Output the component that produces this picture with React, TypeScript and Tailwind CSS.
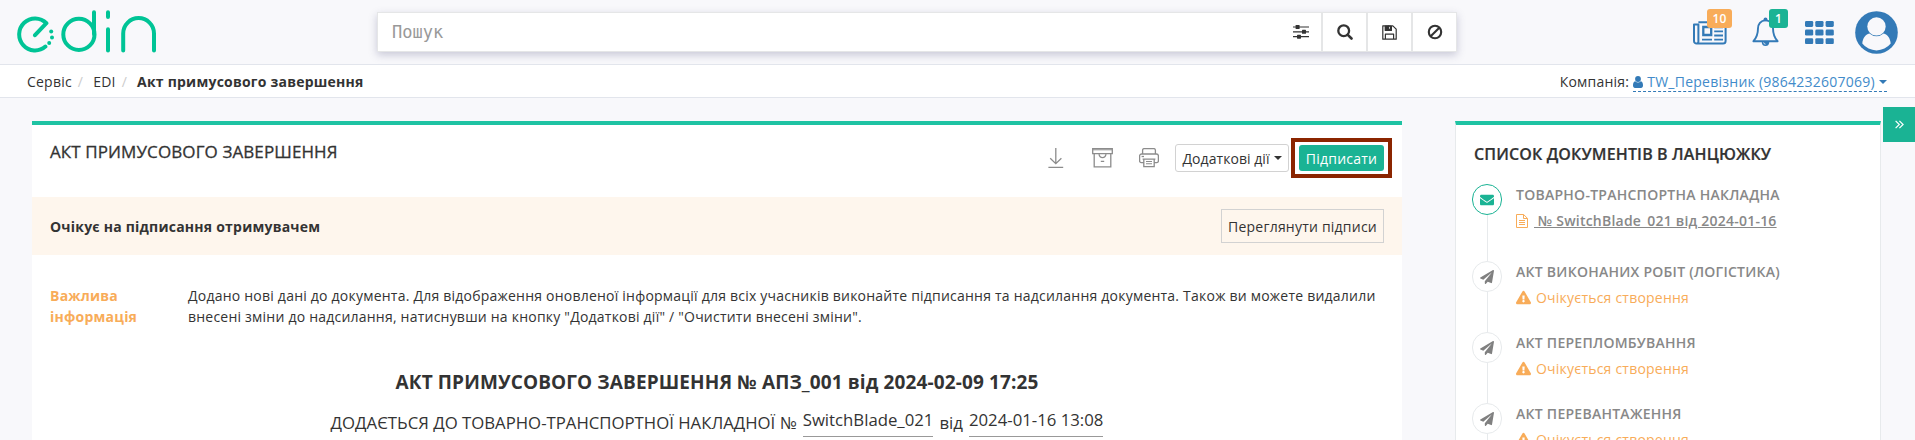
import type { ReactNode } from "react";
import { FaEnvelope, FaExclamationTriangle, FaPaperPlane } from "react-icons/fa";

function Logo() {
  return (
    <svg width="140" height="46" viewBox="0 0 140 46" fill="none" stroke="#00c496" strokeWidth="4" strokeLinecap="round" strokeLinejoin="round" className="block">
      <path d="M18 27.2 L29.4 15.2 A15.9 16 0 1 0 28.4 38.6" />
      <circle cx="61.9" cy="26.4" r="15.6" />
      <path d="M77 4.2 V26 M91 4.2 V9 M91 21.3 V42.6 M106.2 42.6 V25.5 a15.4 15.4 0 0 1 30.8 0 V42.6" />
      <g fill="#00c496" stroke="none">
        <circle cx="34.2" cy="23.5" r="2" />
        <circle cx="35" cy="29.6" r="2" />
        <circle cx="32.2" cy="35" r="2" />
      </g>
    </svg>
  );
}

function SlidersIcon() {
  return (
    <svg width="16" height="14" viewBox="0 0 16 14" fill="#333" className="block">
      <path d="M0 1.4h16v1.2H0zM0 6.2h16v1.2H0zM0 11h16v1.2H0z" />
      <rect x="2.6" y="0" width="4" height="4" rx=".6" />
      <rect x="9" y="4.8" width="4" height="4" rx=".6" />
      <rect x="4" y="9.7" width="4" height="4" rx=".6" />
    </svg>
  );
}

function SearchIcon() {
  return (
    <svg width="16" height="16" viewBox="0 0 16 16" fill="none" stroke="#333" className="block">
      <circle cx="6.7" cy="6.7" r="5.4" strokeWidth="2.3" />
      <path d="M10.8 10.8 14.5 14.5" strokeWidth="2.6" strokeLinecap="round" />
    </svg>
  );
}

function SaveIcon() {
  return (
    <svg width="15" height="15" viewBox="0 0 15 15" fill="none" stroke="#333" strokeWidth="1.2" strokeLinejoin="round" className="block">
      <path d="M.8.8H10.8L14.2 4.2V14.2H.8z" />
      <path d="M3.4 14V9.2H11.6V14M3.4 1V5.4H9.4V1" />
      <path d="M6.4 1.2h2v3.2h-2z" />
      <path d="M3.4 1h3v4.4h-3z" fill="#333" />
    </svg>
  );
}

function BanIcon() {
  return (
    <svg width="16" height="16" viewBox="0 0 16 16" fill="none" stroke="#333" strokeWidth="2.1" className="block">
      <circle cx="8" cy="8" r="6.2" />
      <path d="M3.7 12.3 12.3 3.7" />
    </svg>
  );
}

function NewsIcon() {
  return (
    <svg width="34" height="24" viewBox="0 0 34 24" fill="none" stroke="#337ab7" strokeWidth="2" className="block">
      <path d="M5.4 1.2H32.6V20a2.6 2.6 0 0 1-2.6 2.6H3.6A2.6 2.6 0 0 1 1 20V3.6H5.4V20a2.2 2.2 0 0 1-2 2.6" strokeLinejoin="round" />
      <path d="M10.3 6H18.2V14H10.3z" strokeWidth="2.3" />
      <path d="M9 18.6H19M21.2 6.2H30M21.2 10.4H30M21.2 14.5H30M21.2 18.6H30" strokeWidth="1.9" />
    </svg>
  );
}

function BellIcon() {
  return (
    <svg width="27" height="30" viewBox="0 0 27 30" fill="none" stroke="#337ab7" strokeWidth="1.9" strokeLinejoin="round" className="block">
      <path d="M13.5 3.4C8.6 3.4 6 7.2 6 11.3 6 17.5 4.4 21 1.4 24.2H25.6C22.6 21 21 17.5 21 11.3 21 7.2 18.4 3.4 13.5 3.4z" />
      <circle cx="13.5" cy="2.3" r="1.9" fill="#337ab7" stroke="none" />
      <path d="M9.7 24.8a3.8 4.2 0 0 0 7.6 0z" fill="#337ab7" stroke="none" />
      <path d="M11.6 25.4a2 2 0 0 0 1.9 1.8" stroke="#f8f8fb" strokeWidth=".8" />
    </svg>
  );
}

function GridIcon() {
  const cols = [0, 10.3, 20.6];
  const rows = [0, 8.6, 17.2];
  return (
    <svg width="29" height="23" viewBox="0 0 29 23" fill="#337ab7" className="block">
      {rows.map((y) => cols.map((x) => <rect key={`${x}-${y}`} x={x} y={y} width="8.2" height="5.9" rx="1.3" />))}
    </svg>
  );
}

function AvatarIcon() {
  return (
    <svg width="43" height="43" viewBox="0 0 43 43" className="block">
      <circle cx="21.5" cy="21.5" r="21.3" fill="#337ab7" />
      <path d="M7.3 32.5C7.8 27.5 10.2 23.6 14.4 22.6a10.7 10.7 0 0 0 14.2 0C32.8 23.6 35.2 27.5 35.7 32.5a18 18 0 0 1-28.4 0z" fill="#f8f8fb" />
      <circle cx="21.5" cy="15.4" r="9.2" fill="#f8f8fb" />
    </svg>
  );
}

function PersonIcon() {
  return (
    <svg width="10" height="12" viewBox="0 0 10 12" fill="#337ab7" className="block">
      <circle cx="5" cy="3" r="2.9" />
      <path d="M2.2 5.3a4.1 4.1 0 0 0 5.6 0C9.5 5.5 10 7.5 10 9.6 10 11 9.2 12 8 12H2C.8 12 0 11 0 9.6 0 7.5.5 5.5 2.2 5.3z" />
    </svg>
  );
}

function DownloadIcon() {
  return (
    <svg width="16" height="21" viewBox="0 0 16 21" fill="none" stroke="#8c8c8c" strokeWidth="1.3" className="block">
      <path d="M7.8 0V15.4M2.2 10.2 7.8 15.6 13.4 10.2M.4 19.4H15.2" />
    </svg>
  );
}

function ArchiveIcon() {
  return (
    <svg width="21" height="20" viewBox="0 0 21 20" fill="none" stroke="#8c8c8c" strokeWidth="1.3" className="block">
      <path d="M.7.7H20.3V5.6H.7zM2.2 5.6V18.8H18.8V5.6" />
      <path d="M7 6.2C7.3 8 8.4 9.6 10.5 9.6S13.7 8 14 6.2M8.8 13.4H12.2" />
      <path d="M1 1.8H20" strokeWidth="1" />
    </svg>
  );
}

function PrinterIcon() {
  return (
    <svg width="20" height="20" viewBox="0 0 20 20" fill="none" stroke="#8c8c8c" strokeWidth="1.3" className="block">
      <path d="M3.6 6V2.2A1.6 1.6 0 0 1 5.2.6H14.8A1.6 1.6 0 0 1 16.4 2.2V6M4.6 14.6H2.2A1.6 1.6 0 0 1 .6 13V8A2 2 0 0 1 2.6 6H17.4A2 2 0 0 1 19.4 8V13A1.6 1.6 0 0 1 17.8 14.6H15.4M3.6 11.2H16.4M4.8 11.4V18.6H15.2V11.4" />
      <path d="M7 13.5H13M7 15.8H13" strokeWidth="1.1" />
      <path d="M2.6 8.5H5" />
    </svg>
  );
}

function DocIcon() {
  return (
    <svg width="12" height="14" viewBox="0 0 12 14" fill="none" stroke="#f8ac59" strokeWidth="1" className="block">
      <path d="M.5.5H7.6L11.5 4.4V13.5H.5zM7.5.5V4.5H11.5M3 6.5H9M3 8.5H9M3 10.5H9" />
    </svg>
  );
}

function Caret({ color }: { color: string }) {
  return (
    <svg width="8" height="4" viewBox="0 0 8 4" className="block">
      <path d="M0 0H8L4 4z" fill={color} />
    </svg>
  );
}

function SearchButton({ children }: { children: ReactNode }) {
  return <button className="flex h-full w-[45px] items-center justify-center border-l-2 border-[#e5e6e7] bg-white">{children}</button>;
}

function ChainItem({ title, active, children }: { title: string; active?: boolean; children: ReactNode }) {
  return (
    <li className={active ? "flex h-[77px]" : "flex h-[71px]"}>
      <div className="flex w-[30px] flex-col items-center">
        <div className={active ? "flex h-[31px] w-[30px] shrink-0 items-center justify-center rounded-full border border-[#1ab394]" : "flex h-[31px] w-[30px] shrink-0 items-center justify-center rounded-full border border-[#e7eaec]"}>
          {active ? <FaEnvelope size={14} color="#1ab394" /> : <FaPaperPlane size={14} color="#808080" />}
        </div>
        <div className="w-px grow bg-[#e7eaec]" />
      </div>
      <div className="ml-[14px]">
        <div className="text-[14px] leading-[21px] font-semibold tracking-[0.26px] whitespace-nowrap text-[#888]">{title}</div>
        <div className="mt-[5px] flex h-[21px] items-center text-[14px] leading-[21px]">{children}</div>
      </div>
    </li>
  );
}

function Pending() {
  return (
    <>
      <FaExclamationTriangle size={15} color="#f8ac59" />
      <span className="ml-[5px] whitespace-nowrap text-[#f8ac59]">Очікується створення</span>
    </>
  );
}

export default function App() {
  return (
    <div className="h-[440px] w-[1915px] overflow-hidden bg-[#f8f8fb] font-['Open_Sans',sans-serif] text-[14px] leading-[21px] tracking-[0.22px] text-[#333]">
      <header className="flex h-[65px] border-b border-[#e2e5ec]">
        <div className="w-[377px] pt-[8px] pl-[17px]">
          <Logo />
        </div>
        <div className="mt-[12px] flex h-[40px] w-[1080px] border border-[#e5e6e7] bg-white shadow-[0_3px_8px_rgba(60,60,110,0.25)]">
          <div className="flex grow items-center justify-between pr-[12px] pl-[14px]">
            <span className="font-['DejaVu_Sans_Mono',monospace] text-[17px] tracking-normal text-[#999]">Пошук</span>
            <SlidersIcon />
          </div>
          <SearchButton><SearchIcon /></SearchButton>
          <SearchButton><SaveIcon /></SearchButton>
          <SearchButton><BanIcon /></SearchButton>
        </div>
        <nav className="ml-auto flex pr-[17px]">
          <div className="relative mt-[21px] mr-[25px]">
            <NewsIcon />
            <span className="absolute -top-[12px] left-[14px] flex h-[19px] w-[25px] items-center justify-center rounded-[3px] bg-[#f8ac59] text-[12px] font-semibold text-white">10</span>
          </div>
          <div className="relative mt-[17px] mr-[26px]">
            <BellIcon />
            <span className="absolute -top-[8px] left-[17px] flex h-[19px] w-[19px] items-center justify-center rounded-[3px] bg-[#1ab394] text-[12px] font-semibold text-white">1</span>
          </div>
          <div className="mt-[21px] mr-[21px]"><GridIcon /></div>
          <div className="mt-[11px]"><AvatarIcon /></div>
        </nav>
      </header>

      <div className="flex h-[33px] items-center justify-between border-b border-[#e2e5ec] bg-white pr-[28px] pl-[27px]">
        <div className="flex pt-px whitespace-nowrap">
          <span>Сервіс</span>
          <span className="ml-[6px] text-[#ccc]">/</span>
          <span className="ml-[10px]">EDI</span>
          <span className="ml-[6px] text-[#ccc]">/</span>
          <span className="ml-[10px] font-bold">Акт примусового завершення</span>
        </div>
        <div className="flex pt-px whitespace-nowrap">
          <span>Компанія:</span>
          <a className="ml-[4px] flex h-[21px] items-start border-b border-dashed border-[#337ab7] text-[#428bca]">
            <span className="mt-[5px]"><PersonIcon /></span>
            <span className="mr-[4px] ml-[4px] tracking-[0.25px]">TW_Перевізник (9864232607069)</span>
            <span className="mt-[9px]"><Caret color="#337ab7" /></span>
          </a>
        </div>
      </div>

      <div className="relative flex items-start pt-[23px] pl-[32px]">
        <main className="h-[340px] w-[1370px] border-t-4 border-[#1fc3a3] bg-white">
          <div className="flex h-[72px] items-start pr-[10px] pl-[18px]">
            <h1 className="mt-[16px] text-[17px] leading-[21px] tracking-[0.1px] whitespace-nowrap [-webkit-text-stroke:0.3px_#333]">АКТ ПРИМУСОВОГО ЗАВЕРШЕННЯ</h1>
            <div className="mt-[13px] ml-auto flex h-[40px] items-center">
              <DownloadIcon />
              <div className="ml-[28px]"><ArchiveIcon /></div>
              <div className="ml-[26px]"><PrinterIcon /></div>
              <button className="ml-[16px] flex h-[28px] w-[114px] items-center justify-center gap-[4px] rounded-[3px] border border-[#d2d2d2] bg-white tracking-[0.05px] whitespace-nowrap">
                Додаткові дії
                <Caret color="#333" />
              </button>
              <div className="ml-[2px] flex h-[40px] w-[101px] items-center justify-center border-4 border-[#8b2500]">
                <button className="flex h-[26px] w-[85px] items-center justify-center rounded-[3px] bg-[#1ab394] text-white">Підписати</button>
              </div>
            </div>
          </div>
          <div className="flex h-[58px] items-center justify-between bg-[#fef6ed] pr-[18px] pl-[18px]">
            <span className="font-bold">Очікує на підписання отримувачем</span>
            <button className="flex h-[34px] w-[163px] items-center justify-center border border-[#d2d2d2] whitespace-nowrap">Переглянути підписи</button>
          </div>
          <div className="flex pt-[30px] pl-[18px]">
            <div className="w-[138px] shrink-0 font-bold text-[#f8ac59]">Важлива<br />інформація</div>
            <p className="whitespace-nowrap">
              Додано нові дані до документа. Для відображення оновленої інформації для всіх учасників виконайте підписання та надсилання документа. Також ви можете видалили<br />
              внесені зміни до надсилання, натиснувши на кнопку "Додаткові дії" / "Очистити внесені зміни".
            </p>
          </div>
          <h2 className="mt-[42px] text-center text-[19px] leading-[27px] font-bold tracking-[0.12px] whitespace-nowrap">АКТ ПРИМУСОВОГО ЗАВЕРШЕННЯ № АПЗ_001 від 2024-02-09 17:25</h2>
          <div className="mt-[12px] flex items-start justify-center text-[16.75px] leading-[24px] tracking-normal whitespace-nowrap">
            <span className="pt-[3px]">ДОДАЄТЬСЯ ДО ТОВАРНО-ТРАНСПОРТНОЇ НАКЛАДНОЇ №</span>
            <span className="ml-[6px] h-[29px] border-b border-[#999]">SwitchBlade_021</span>
            <span className="ml-[6px] pt-[3px]">від</span>
            <span className="ml-[6px] h-[29px] border-b border-[#999]">2024-01-16 13:08</span>
          </div>
        </main>

        <aside className="ml-[53px] h-[340px] w-[426px] border-x border-t-4 border-x-[#e7eaec] border-t-[#1fc3a3] bg-white pl-[16px]">
          <h3 className="mt-[17px] ml-[2px] text-[16px] leading-[24px] font-semibold tracking-[0.13px] whitespace-nowrap [-webkit-text-stroke:0.2px_#333]">СПИСОК ДОКУМЕНТІВ В ЛАНЦЮЖКУ</h3>
          <ul className="mt-[18px]">
            <ChainItem title="ТОВАРНО-ТРАНСПОРТНА НАКЛАДНА" active>
              <DocIcon />
              <a className="ml-[6px] font-semibold whitespace-pre text-[#888] underline">{" № SwitchBlade_021 від 2024-01-16"}</a>
            </ChainItem>
            <ChainItem title="АКТ ВИКОНАНИХ РОБІТ (ЛОГІСТИКА)"><Pending /></ChainItem>
            <ChainItem title="АКТ ПЕРЕПЛОМБУВАННЯ"><Pending /></ChainItem>
            <ChainItem title="АКТ ПЕРЕВАНТАЖЕННЯ"><Pending /></ChainItem>
          </ul>
        </aside>

        <button className="absolute top-[9px] right-0 flex h-[35px] w-[32px] items-center justify-center bg-[#1ab394]">
          <svg width="9" height="9" viewBox="0 0 9 9" fill="none" stroke="#fff" strokeWidth="1.2">
            <path d="M.6.8 4.3 4.5.6 8.2M4.4.8 8.1 4.5 4.4 8.2" />
          </svg>
        </button>
      </div>
    </div>
  );
}
